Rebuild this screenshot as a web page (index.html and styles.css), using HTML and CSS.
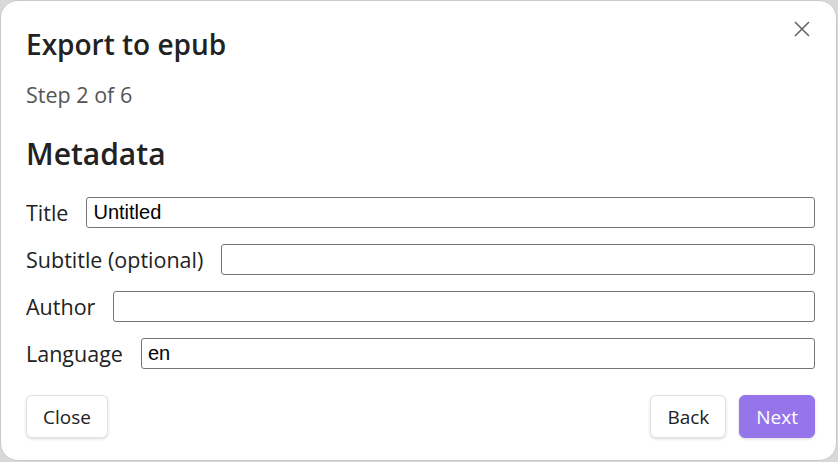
FILE: index.html
```html
<!DOCTYPE html>
<html>
<head>
<meta charset="utf-8">
<link rel="stylesheet" href="styles.css">
</head>
<body>
<div class="dialog">
  <button class="close-x" aria-label="Close">
    <svg width="18" height="18" viewBox="0 0 18 18"><path d="M2 2 L16 16 M16 2 L2 16" stroke="#666" stroke-width="1.6" fill="none"/></svg>
  </button>
  <h1 class="title">Export to epub</h1>
  <div class="step">Step 2 of 6</div>
  <h2 class="section">Metadata</h2>
  <div class="fields">
    <label class="row"><span class="lbl">Title</span><input class="inp" type="text" value="Untitled"></label>
    <label class="row"><span class="lbl">Subtitle (optional)</span><input class="inp" type="text" value=""></label>
    <label class="row"><span class="lbl">Author</span><input class="inp" type="text" value=""></label>
    <label class="row"><span class="lbl">Language</span><input class="inp" type="text" value="en"></label>
  </div>
  <div class="footer">
    <button class="btn">Close</button>
    <div class="spacer"></div>
    <button class="btn">Back</button>
    <button class="btn primary">Next</button>
  </div>
</div>
</body>
</html>
```
FILE: styles.css
```css
html, body {
  margin: 0;
  padding: 0;
  background: #d9d9d9;
}
body {
  width: 838px;
  height: 462px;
  overflow: hidden;
  font-family: "Open Sans", "Noto Sans", sans-serif;
  color: #222;
}
.dialog {
  position: relative;
  box-sizing: border-box;
  width: 837px;
  height: 461px;
  background: #fff;
  border-radius: 18px;
  border: 1px solid #c8c8c8;
  padding: 0 21px 0 25px;
  display: flex;
  flex-direction: column;
}
.close-x {
  position: absolute;
  top: 19px;
  right: 25px;
  border: 0;
  background: none;
  padding: 0;
  width: 18px;
  height: 18px;
  cursor: pointer;
}
.close-x svg { display: block; }
.title {
  margin: 24px 0 0 0;
  font-size: 28px;
  font-weight: 600;
  line-height: 38px;
  color: #222;
}
.step {
  margin-top: 17px;
  font-size: 21.5px;
  line-height: 30px;
  color: #555;
}
.section {
  margin: 23px 0 0 0;
  font-size: 30px;
  font-weight: 600;
  line-height: 42px;
  color: #222;
}
.fields {
  margin-top: 22px;
  display: flex;
  flex-direction: column;
  gap: 16px;
}
.row {
  display: flex;
  align-items: center;
  gap: 18px;
}
.lbl {
  font-size: 21.5px;
  line-height: 30px;
  color: #222;
  white-space: nowrap;
}
.inp {
  flex: 1;
  box-sizing: border-box;
  height: 31px;
  border: 1px solid #767676;
  border-radius: 3px;
  font-family: "Liberation Sans", Arial, sans-serif;
  font-size: 20px;
  padding: 0 6px;
  color: #000;
  background: #fff;
  outline: none;
}
.footer {
  margin-top: 26px;
  display: flex;
  gap: 13px;
}
.spacer { flex: 1; }
.btn {
  box-sizing: border-box;
  height: 43px;
  padding: 0 16px;
  border: 1px solid #e2e2e2;
  border-radius: 6px;
  background: #fff;
  font-family: "Open Sans", "Noto Sans", sans-serif;
  font-size: 19px;
  color: #222;
  box-shadow: 0 1px 3px rgba(0,0,0,0.15);
  cursor: pointer;
}
.btn.primary {
  background: #9575e9;
  border-color: #9575e9;
  color: #fff;
}
```
